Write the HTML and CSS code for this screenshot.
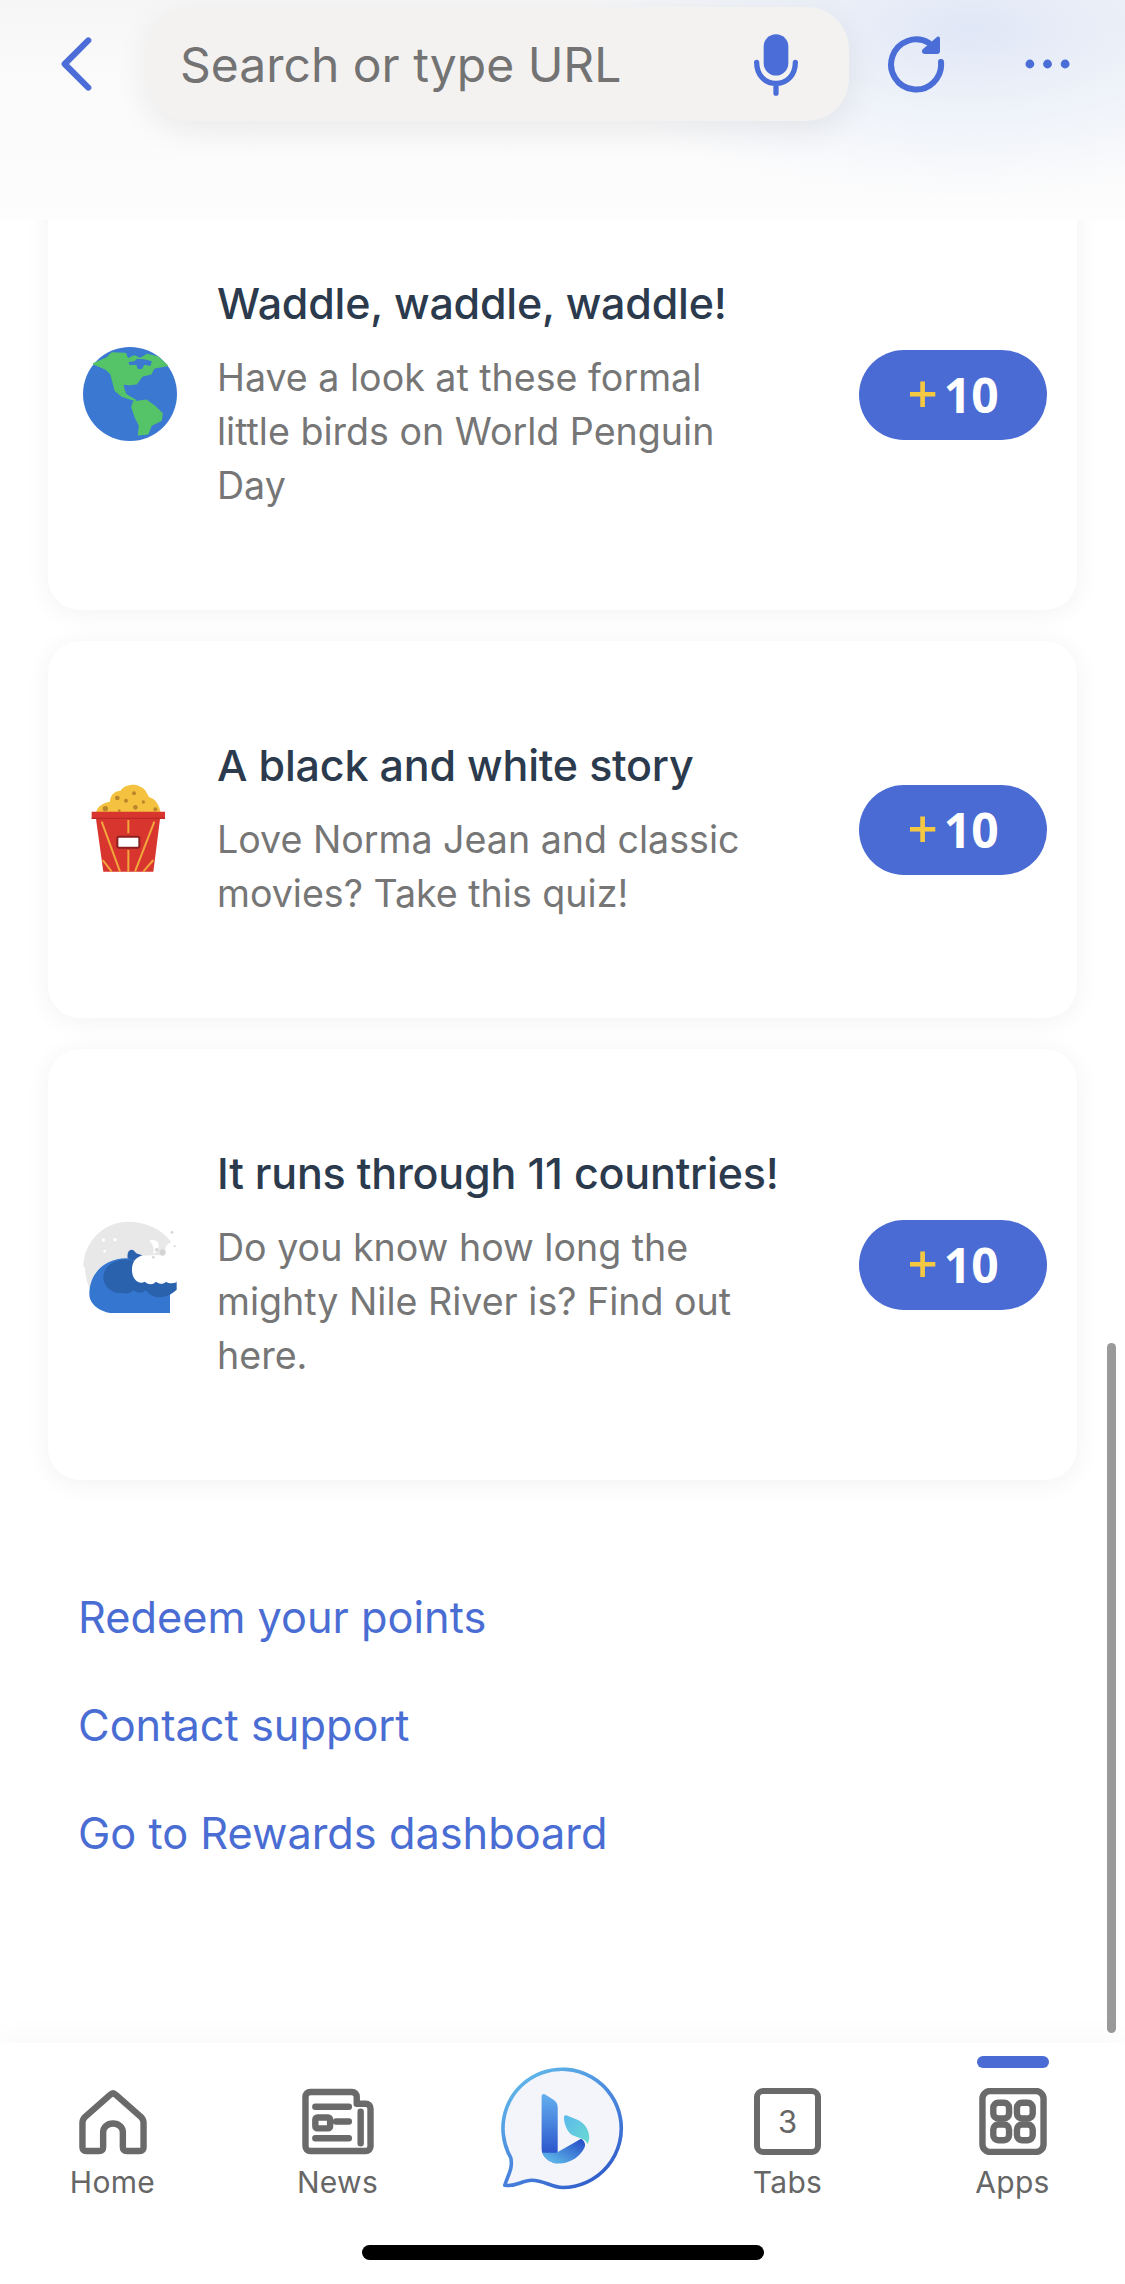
FILE: index.html

```html
<!DOCTYPE html>
<html lang="en">
<head>
  <meta charset="UTF-8">
  <title>Rewards</title>
  <link rel="stylesheet" href="styles.css">
</head>
<body>
<div class="screen">

  <header class="topbar">
    <svg class="back" viewBox="0 0 36 60"><path d="M31 5 6 30l25 25"/></svg>
    <div class="search">
      <span class="search-text">Search or type URL</span>
      <svg class="mic" viewBox="0 0 50 70">
        <rect x="11" y="0" width="28" height="47" rx="14" class="fill"/>
        <path d="M3 32c0 14 9 24 22 24s22-10 22-24M25 56v11" class="line"/>
      </svg>
    </div>
    <svg class="reload" viewBox="0 0 60 60">
      <path d="M54 28A25 25 0 1 1 42 9" class="line"/>
      <path d="M50 3c2-1 3 0 3 2v12c0 2-1 3-3 3H38c-3 0-4-3-2-5z" class="fill"/>
    </svg>
    <svg class="more" viewBox="0 0 48 12">
      <circle cx="6" cy="6" r="4.5"/><circle cx="24" cy="6" r="4.5"/><circle cx="42" cy="6" r="4.5"/>
    </svg>
  </header>

  <main class="content">
    <div class="cards">

      <section class="card">
        <svg class="card-icon" viewBox="128 85 282 288">
          <circle cx="269" cy="226" r="141" fill="#3b78d2"/>
          <g fill="#55c368" stroke="#55c368" stroke-width="5" stroke-linejoin="round">
            <path d="M160 135L200 118 215 103 255 105 262 122 282 112 300 120 320 108 352 115 380 140 340 148 332 165 305 172 288 195 265 198 252 222 262 232 285 245 245 232 225 215 212 165 195 150z"/>
            <path d="M280 250L318 245 345 265 365 285 362 305 332 320 322 345 295 348 298 320 285 295 275 265z"/>
          </g>
          <path fill="#3b78d2" d="M264 130L282 128 290 120 312 122 335 128 330 142 312 138 305 152 292 150 288 138 268 140zM250 198L266 200 268 216 254 218z"/>
        </svg>
        <div class="card-text">
          <h2>Waddle, waddle, waddle!</h2>
          <p>Have a look at these formal little birds on World Penguin Day</p>
        </div>
        <button class="points"><span class="plus">+</span>10</button>
      </section>

      <section class="card">
        <svg class="card-icon" viewBox="69 36 282 288">
          <path fill="#f4c23f" d="M108 128C112 108 130 98 150 95 150 75 165 62 182 62 190 45 225 38 240 50 258 55 262 75 268 82 285 85 298 105 302 128z"/>
          <g fill="#b9862c"><circle cx="172" cy="84" r="7"/><circle cx="198" cy="92" r="6"/><circle cx="222" cy="70" r="6"/><circle cx="226" cy="112" r="7"/><circle cx="250" cy="96" r="5"/><circle cx="136" cy="116" r="8"/><circle cx="286" cy="118" r="6"/><circle cx="178" cy="122" r="4"/></g>
          <path fill="#d8352f" d="M95 125h220v22h-15l-20 158H130l-22-158H95z"/>
          <path fill="#b82a28" d="M95 143h220v4H95z"/>
          <path fill="none" stroke="#f2a63c" stroke-width="6" d="M125 155l55 150M205 150v40M205 240v65M283 155l-58 150M128 270l27 35M280 270l-30 35"/>
          <rect x="172" y="200" width="66" height="33" rx="5" fill="#fff" stroke="#8c2020" stroke-width="6"/>
        </svg>
        <div class="card-text">
          <h2>A black and white story</h2>
          <p>Love Norma Jean and classic movies? Take this quiz!</p>
        </div>
        <button class="points"><span class="plus">+</span>10</button>
      </section>

      <section class="card">
        <svg class="card-icon" viewBox="69 54 282 288">
          <path fill="#e8e8e8" d="M70 205C70 130 130 68 205 68c50 0 100 22 128 60l-15 12-25 110-110 80c-30 0-45-5-68-25-25-25-40-60-40-100z"/>
          <path fill="#3577d0" d="M210 178C140 172 88 220 88 285c0 35 40 58 78 58 12 0 18 8 30 0 12 8 22 8 32 0 12 8 22 8 32 0 12 8 22 8 32 0 12 6 22 6 38 4V255z"/>
          <path fill="#2a62ad" d="M215 184c-45-10-85 15-85 52 0 26 28 50 58 46 14 4 24 0 32-8 14 10 26 10 38 0 12 16 30 24 48 20 18-2 30-10 44-22v-25z"/>
          <path fill="#2a62ad" d="M203 178c-2-14 2-26 12-26 8 0 10 10 18 12 6 2 12 4 16 8l-25 14z"/>
          <path fill="#fff" d="M245 170c-24 6-34 32-27 58 6 20 24 28 36 20 12 10 24 10 34 0 12 8 22 8 30 0 8 6 20 6 32 2v-62l-35-15-20-5z"/>
          <path fill="#fff" d="M268 124c8-4 20-2 26 6 4 8 2 18-2 26l-12 10c2-10 2-22-4-30z"/>
          <g fill="#fff"><circle cx="130" cy="123" r="5"/><circle cx="165" cy="122" r="5"/><circle cx="134" cy="157" r="4"/></g>
          <g fill="#d4d4d4"><circle cx="308" cy="160" r="9"/><circle cx="290" cy="152" r="5"/><circle cx="336" cy="100" r="4"/><circle cx="344" cy="142" r="3"/><circle cx="280" cy="175" r="4"/></g>
        </svg>
        <div class="card-text">
          <h2>It runs through 11 countries!</h2>
          <p>Do you know how long the mighty Nile River is? Find out here.</p>
        </div>
        <button class="points"><span class="plus">+</span>10</button>
      </section>

    </div>

    <nav class="links">
      <a href="#">Redeem your points</a>
      <a href="#">Contact support</a>
      <a href="#">Go to Rewards dashboard</a>
    </nav>

    <div class="scrollbar"></div>
  </main>

  <footer class="tabbar">
    <div class="tab">
      <svg class="tab-icon" viewBox="0 0 68 68"><path d="M6 29 31 7c2-2 4-2 6 0l25 22c2 2 3 4 3 6v25c0 3-1 4-4 4H48c-3 0-4-1-4-4V45c0-5-4-9-10-9s-10 4-10 9v15c0 3-1 4-4 4H7c-3 0-4-1-4-4V35c0-2 1-4 3-6z"/></svg>
      <span>Home</span>
    </div>
    <div class="tab">
      <svg class="tab-icon" viewBox="0 0 74 68"><path d="M56 16V9c0-3-2-5-5-5H9C6 4 4 6 4 9v50c0 3 2 5 5 5h56c3 0 5-2 5-5V21c0-3-2-5-5-5h-9M60 24v32M14 19h34M14 51h34M35 34h13"/><rect x="14" y="30" width="15" height="11" rx="2"/></svg>
      <span>News</span>
    </div>
    <div class="tab tab-center">
      <svg class="bing" viewBox="0 0 420 420">
        <defs>
          <linearGradient id="ring" x1="0.1" y1="0" x2="0.8" y2="1">
            <stop offset="0" stop-color="#62bdea"/><stop offset="0.55" stop-color="#4a86de"/><stop offset="1" stop-color="#2f5bc9"/>
          </linearGradient>
          <linearGradient id="bar" x1="0" y1="0" x2="0" y2="1">
            <stop offset="0" stop-color="#64b0ef"/><stop offset="1" stop-color="#2346c6"/>
          </linearGradient>
          <linearGradient id="ribbon" x1="0" y1="1" x2="1" y2="0">
            <stop offset="0" stop-color="#66c8ee"/><stop offset="1" stop-color="#2346c6"/>
          </linearGradient>
          <linearGradient id="wing" x1="0" y1="0" x2="1" y2="1">
            <stop offset="0" stop-color="#5cb8ee"/><stop offset="1" stop-color="#69dcd0"/>
          </linearGradient>
        </defs>
        <path fill="#f3f5fb" stroke="url(#ring)" stroke-width="11" stroke-linejoin="round" d="M42 378c8-28 26-52 18-84A180 180 0 1 1 218 385c-34 0-56-22-94-22-30 0-50 22-82 15z"/>
        <path fill="url(#bar)" d="M154 108c0-7 5-10 11-6l24 15c9 6 14 13 14 24v133l-4 38c-24-5-45-22-45-45z"/>
        <path fill="url(#ribbon)" d="M199 279l50-28 25-14c10 6 16 17 10 28-13 24-38 45-72 47-25 1-47-10-56-33z"/>
        <path fill="url(#wing)" d="M222 172c0-5 4-8 9-6l30 12c22 9 38 30 38 55 0 8-2 14-5 20-3-8-10-14-22-18l-22-8c-16-6-28-35-28-55z"/>
      </svg>
    </div>
    <div class="tab">
      <div class="tab-count">3</div>
      <span>Tabs</span>
    </div>
    <div class="tab tab-active">
      <svg class="tab-icon" viewBox="0 0 68 68"><rect x="3" y="3" width="62" height="62" rx="8"/><rect x="14" y="15" width="16" height="16" rx="5"/><rect x="38" y="15" width="16" height="16" rx="5"/><rect x="14" y="37" width="16" height="16" rx="5"/><rect x="38" y="37" width="16" height="16" rx="5"/></svg>
      <span>Apps</span>
    </div>
    <div class="home-bar"></div>
  </footer>

</div>
</body>
</html>
```

FILE: styles.css

```css
* { box-sizing: border-box; }
html, body { margin: 0; padding: 0; }
body { font-family: Inter, "Noto Sans", sans-serif; background: #fff; }

.screen {
  width: 1125px;
  height: 2284px;
  display: flex;
  flex-direction: column;
  overflow: hidden;
}

/* top bar */
.topbar {
  position: relative;
  z-index: 2;
  height: 220px;
  flex: none;
  padding: 7px 54px 0 59px;
  display: flex;
  align-items: flex-start;
  background:
    radial-gradient(ellipse 400px 170px at 970px 30px, #e0e7f6 0%, rgba(232,238,248,.7) 45%, rgba(250,251,252,0) 100%),
    linear-gradient(#f6f6f7 0, #fafafb 70px, #fdfdfd 220px);
}
.back { width: 34px; height: 58px; margin-top: 28px; fill: none; stroke: #4a6dd8; stroke-width: 6.5; stroke-linecap: round; stroke-linejoin: round; }
.search {
  width: 702px;
  height: 114px;
  margin-left: 54px;
  padding: 0 51px 0 33px;
  border-radius: 42px;
  background: #f3f2f1;
  box-shadow: 0 10px 34px rgba(0,0,0,.07);
  display: flex;
  align-items: center;
  justify-content: space-between;
}
.search-text { font-size: 48px; color: #737373; }
.mic { width: 44px; height: 62px; margin-top: 1px; }
.fill { fill: #4a6dd8; }
.line { fill: none; stroke: #4a6dd8; stroke-width: 6; stroke-linecap: round; }
.reload { width: 60px; height: 60px; margin: 27px 0 0 38px; }
.more { width: 47px; height: 12px; margin: 51px 0 0 auto; fill: #4a6dd8; }

/* scrolling part */
.content {
  position: relative;
  flex: 1;
  min-height: 0;
}
.cards {
  margin-top: -41px;
  padding: 0 48px;
  display: flex;
  flex-direction: column;
  gap: 31px;
}
.card {
  display: flex;
  align-items: center;
  padding: 97px 30px 97px 35px;
  border-radius: 32px;
  background: #fff;
  box-shadow: 0 3px 26px rgba(0,0,0,.055);
}
.card-icon { width: 94px; height: 96px; flex: none; }
.card-text { width: 540px; margin-left: 40px; }
.card-text h2 { margin: 0 0 21px; font-size: 43px; line-height: 54px; font-weight: 450; color: #2b3a4d; letter-spacing: -.2px; white-space: nowrap; }
.card-text p { margin: 0; font-size: 37.6px; line-height: 54px; color: #767676; }
.points {
  width: 188px;
  height: 90px;
  margin-left: auto;
  padding: 0;
  border: 0;
  border-radius: 45px;
  background: #4a6bd3;
  color: #fff;
  font-family: "Open Sans", sans-serif;
  font-size: 48px;
  font-weight: 700;
}
.plus { color: #f5c842; margin-right: 6px; font-size: 53px; font-weight: 600; line-height: 0; }

.links {
  margin-top: 110px;
  padding-left: 78px;
  display: flex;
  flex-direction: column;
  gap: 54px;
}
.links a { font-size: 43.3px; line-height: 54px; color: #4a6dd3; text-decoration: none; }

.scrollbar {
  position: absolute;
  right: 9px;
  top: 1123px;
  width: 9px;
  height: 690px;
  border-radius: 5px;
  background: #9a9a9a;
}

/* bottom tabs */
.tabbar {
  position: relative;
  height: 241px;
  flex: none;
  display: grid;
  grid-template-columns: repeat(5, 225px);
  background: #fff;
  box-shadow: 0 -10px 24px rgba(0,0,0,.025);
}
.tab {
  position: relative;
  padding-top: 45px;
  display: flex;
  flex-direction: column;
  align-items: center;
  font-size: 30px;
  line-height: 36px;
  color: #666;
}
.tab span { margin-top: 9px; letter-spacing: .3px; }
.tab-icon { width: 74px; height: 67px; fill: none; stroke: #6a6a6a; stroke-width: 6.5; stroke-linejoin: round; stroke-linecap: round; }
.tab-count {
  width: 67px;
  height: 67px;
  border: 6px solid #6a6a6a;
  border-radius: 9px;
  display: flex;
  align-items: center;
  justify-content: center;
  font-size: 31px;
}
.tab-active::before {
  content: "";
  position: absolute;
  top: 13px;
  left: 77px;
  width: 72px;
  height: 12px;
  border-radius: 6px;
  background: #4a6bd3;
}
.tab-center { padding-top: 18px; }
.bing { width: 138px; height: 138px; margin-left: -5px; }
.home-bar {
  position: absolute;
  left: 362px;
  top: 202px;
  width: 402px;
  height: 15px;
  border-radius: 8px;
  background: #000;
}
```
